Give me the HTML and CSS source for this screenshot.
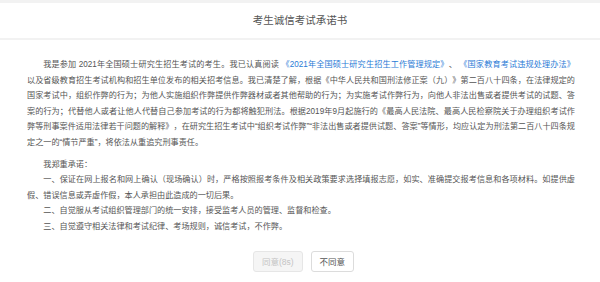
FILE: index.html
```html
<!DOCTYPE html>
<html lang="zh-CN">
<head>
<meta charset="UTF-8" />
<meta name="viewport" content="width=device-width, initial-scale=1" />
<title>考生诚信考试承诺书</title>
<link rel="stylesheet" href="styles.css">
</head>
<body>

<div class="dialog">
  <div class="dialog-header">考生诚信考试承诺书</div>

  <div class="dialog-body">
    <p class="para">我是参加 2021年全国硕士研究生招生考试的考生。我已认真阅读 <a href="#">《2021年全国硕士研究生招生工作管理规定》</a>、 <a href="#">《国家教育考试违规处理办法》</a><span class="nowrap">以及</span>省级教育招生考试机构和招生单位发布的相关招考信息。我已清楚了解，根据《中华人民共和国刑法修正案（九）》第二百八十四条，在法律规定的国家考试中，组织作弊的行为；为他人实施组织作弊提供作弊器材或者其他帮助的行为；为实施考试作弊行为，向他人非法出售或者提供考试的试题、答案的行为；代替他人或者让他人代替自己参加考试的行为都将触犯刑法。根据2019年9月起施行的《最高人民法院、最高人民检察院关于办理组织考试作弊等刑事案件适用法律若干问题的解释》，在研究生招生考试中“组织考试作弊”“非法出售或者提供试题、答案”等情形，均应认定为刑法第二百八十四条规定之一的“情节严重”，将依法从重追究刑事责任。</p>

    <p class="para gap">我郑重承诺：</p>
    <p class="para">一、保证在网上报名和网上确认（现场确认）时，严格按照报考条件及相关政策要求选择填报志愿，如实、准确提交报考信息和各项材料。如提供虚假、错误信息或弄虚作假，本人承担由此造成的一切后果。</p>
    <p class="para">二、自觉服从考试组织管理部门的统一安排，接受监考人员的管理、监督和检查。</p>
    <p class="para">三、自觉遵守相关法律和考试纪律、考场规则，诚信考试，不作弊。</p>
  </div>

  <div class="dialog-footer">
    <button class="btn btn-disabled" disabled>同意(8s)</button>
    <button class="btn">不同意</button>
  </div>
</div>

</body>
</html>
```

FILE: styles.css
```css
body {
  margin: 0;
  padding: 0;
  background: #fff;
  font-family: "Liberation Sans", "Noto Sans CJK SC", sans-serif;
  color: #555;
}
.dialog {
  width: 600px;
  height: 282px;
  border-top: 3px solid #f2f2f2;
  box-sizing: border-box;
}
.dialog-header {
  height: 35px;
  line-height: 35px;
  text-align: center;
  font-size: 10.5px;
  color: #555;
  border-bottom: 2px solid #f2f2f2;
}
.dialog-body {
  padding: 17px 25px 0 27px;
  font-size: 8.15px;
  line-height: 15.6px;
  text-spacing-trim: space-all;
}
.para {
  margin: 0;
  text-indent: 2em;
  text-align: justify;
}
.para.gap {
  margin-top: 6px;
}
.para a {
  color: #2b7bd6;
  text-decoration: none;
}
.nowrap {
  white-space: nowrap;
}
.dialog-footer {
  display: flex;
  justify-content: center;
  gap: 8px;
  margin-top: 16px;
  padding-left: 7px;
}
.btn {
  height: 21px;
  padding: 0 8px;
  font-family: "Liberation Sans", "Noto Sans CJK SC", sans-serif;
  font-size: 8.5px;
  color: #555;
  background: #fff;
  border: 1px solid #dcdcdc;
  border-radius: 3px;
  cursor: pointer;
}
.btn-disabled {
  color: #c4c4c4;
  background: #f5f5f5;
  border-color: #e6e6e6;
  cursor: not-allowed;
}
```
